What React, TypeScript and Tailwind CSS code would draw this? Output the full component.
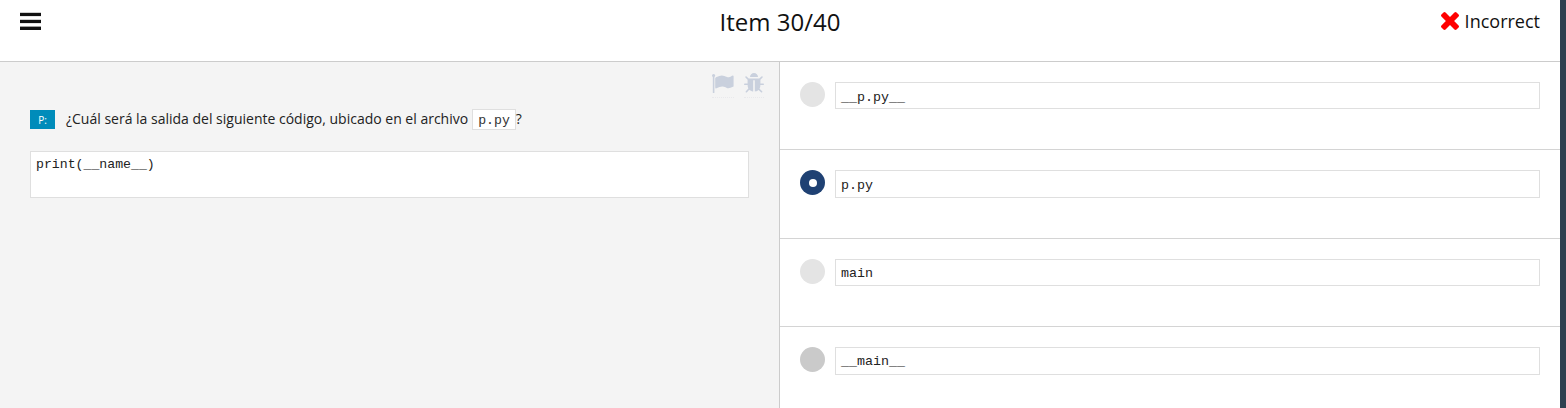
type Choice = { text: string; state: "idle" | "selected" | "answer"; leading: string };

const choices: Choice[] = [
  { text: "__p.py__", state: "idle", leading: "leading-[30px]" },
  { text: "p.py", state: "selected", leading: "leading-[30px]" },
  { text: "main", state: "idle", leading: "leading-[28px]" },
  { text: "__main__", state: "answer", leading: "leading-[28px]" },
];

const dot = { idle: "bg-[#e4e4e4]", selected: "bg-[#1f4173]", answer: "bg-[#cacaca]" };

function MenuIcon() {
  return (
    <svg viewBox="0 0 21 18" className="mt-[12px] h-[18px] w-[21px]" fill="currentColor">
      <rect y="0.8" width="21" height="3.3" />
      <rect y="7.8" width="21" height="3.3" />
      <rect y="14.6" width="21" height="3.4" />
    </svg>
  );
}

function CrossIcon() {
  return (
    <svg viewBox="302 366 1188 1188" className="-mt-px size-[18px] text-[#f00]" fill="currentColor">
      <path d="M1490 1322q0 40-28 68l-136 136q-28 28-68 28t-68-28l-294-294-294 294q-28 28-68 28t-68-28l-136-136q-28-28-28-68t28-68l294-294-294-294q-28-28-28-68t28-68l136-136q28-28 68-28t68 28l294 294 294-294q28-28 68-28t68 28l136 136q28 28 28 68t-28 68l-294 294 294 294q28 28 28 68z" />
    </svg>
  );
}

function FlagIcon() {
  return (
    <svg viewBox="64 128 1728 1536" className="mt-px h-[19.2px] w-[21.6px]" fill="currentColor">
      <path d="M320 256q0 72-64 110v1266q0 13-9.5 22.5t-22.5 9.5h-64q-13 0-22.5-9.5t-9.5-22.5v-1266q-64-38-64-110 0-53 37.5-90.5t90.5-37.5 90.5 37.5 37.5 90.5zm1472 64v763q0 25-12.5 38.5t-39.5 27.5q-215 116-369 116-61 0-123.5-22t-108.5-48-115.5-48-142.5-22q-192 0-464 146-17 9-33 9-26 0-45-19t-19-45v-742q0-32 31-55 21-14 79-43 236-120 421-120 107 0 200 29t219 88q38 19 88 19 54 0 117.5-21t110-47 88-47 54.5-21q26 0 45 19t19 45z" />
    </svg>
  );
}

function BugIcon() {
  return (
    <svg viewBox="96 64 1600 1600" className="size-5" fill="currentColor">
      <path d="M1696 960q0 26-19 45t-45 19h-224q0 171-67 290l208 209q19 19 19 45t-19 45q-18 19-45 19t-45-19l-198-197q-5 5-15 13t-42 28.5-65 36.5-82 29-97 13v-896h-128v896q-51 0-101.5-13.5t-87-33-66-39-43.5-32.5l-15-14-183 207q-20 21-48 21-24 0-43-16-19-18-20.5-44.5t15.5-46.5l202-227q-58-114-58-274h-224q-26 0-45-19t-19-45 19-45 45-19h224v-294l-173-173q-19-19-19-45t19-45 45-19 45 19l173 173h844l173-173q19-19 45-19t45 19 19 45-19 45l-173 173v294h224q26 0 45 19t19 45zm-480-576h-640q0-133 93.5-226.5t226.5-93.5 226.5 93.5 93.5 226.5z" />
    </svg>
  );
}

export default function App() {
  return (
    <div className="flex h-[408px] w-[1566px] overflow-hidden bg-white font-['Open_Sans',sans-serif] text-[#111]">
      <div className="flex w-[1560px] flex-col">
        <header className="grid h-[62px] shrink-0 grid-cols-3 border-b border-[#ccc] px-5">
          <MenuIcon />
          <h1 className="mt-[5px] text-center text-[24px] leading-[33px]">Item 30/40</h1>
          <div className="mt-[9px] flex h-6 items-center justify-end gap-[6px] text-[18px]">
            <CrossIcon />
            Incorrect
          </div>
        </header>
        <main className="flex h-[346px]">
          <section className="w-[780px] border-r border-[#ccc] bg-[#f4f4f4] px-[30px]">
            <div className="mt-[11px] -mr-[15px] flex h-[25px] justify-end gap-[10.5px] text-[#c9d0dd]">
              <span className="h-[25px] border-b border-dotted border-[#e9e9ec]"><FlagIcon /></span>
              <span className="h-[25px] border-b border-dotted border-[#e9e9ec]"><BugIcon /></span>
            </div>
            <div className="mt-[11px] flex h-[21px] text-[14px] leading-[21px] text-[#222]">
              <span className="mt-px mr-[11px] flex h-[19px] w-[25px] items-center justify-center bg-[#008cba] pt-px text-[10px] text-white">P:</span>
              <p className="-mt-px">¿Cuál será la salida del siguiente código, ubicado en el archivo</p>
              <code className="ml-1 h-[21px] w-[44px] border border-[#dfdfdf] bg-white px-[5px] pt-px font-['Liberation_Mono',monospace] text-[13.2px] leading-[20px] text-[#333]">p.py</code>
              <span className="-mt-px -ml-[0.5px]">?</span>
            </div>
            <pre className="mt-[21px] h-[47px] w-[719px] border border-[#dfdfdf] bg-white px-[5px] pt-[3px] font-['Liberation_Mono',monospace] text-[13.2px] leading-[20px] text-[#222]">print(__name__)</pre>
          </section>
          <section className="flex-1">
            {choices.map((c) => (
              <div key={c.text} className="flex h-[88.4px] gap-[10px] border-b border-[#d4d4d4] px-5 pt-5">
                <span className={`flex size-[25px] items-center justify-center rounded-full ${dot[c.state]}`}>
                  {c.state === "selected" && <i className="mt-[1px] ml-px size-2 rounded-full bg-white" />}
                </span>
                <code className={`h-[27.4px] flex-1 border border-[#dfdfdf] px-[5px] font-['Liberation_Mono',monospace] text-[13.33px] text-[#222] ${c.leading}`}>{c.text}</code>
              </div>
            ))}
          </section>
        </main>
      </div>
      <aside className="w-[6px] bg-[#2f4050]" />
    </div>
  );
}
